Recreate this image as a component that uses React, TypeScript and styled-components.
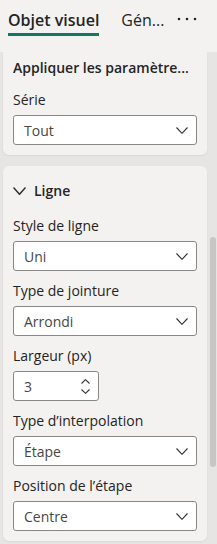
import React from "react"
import styled, { createGlobalStyle } from "styled-components"

const Global = createGlobalStyle`
    html, body { margin: 0; padding: 0; }
    body { font-family: "Segoe UI", "Open Sans", sans-serif; color: #252423; }
`

const Pane = styled.div`
    width: 217px;
    height: 544px;
    overflow: hidden;
    display: flex;
    flex-direction: column;
    background: #e6e5e3;
`

const TabBar = styled.div`
    height: 52px;
    flex: none;
    background: #f3f2f1;
    display: flex;
    align-items: flex-start;
    padding-left: 8px;
    box-sizing: border-box;
`

const Tab = styled.div<{ $active?: boolean }>`
    font-size: 16px;
    line-height: 22px;
    padding-top: 9px;
    padding-bottom: 2px;
    margin-right: ${p => (p.$active ? "22px" : "13px")};
    font-weight: ${p => (p.$active ? 600 : 400)};
    color: #252423;
    border-bottom: 3px solid ${p => (p.$active ? "#117865" : "transparent")};
    white-space: nowrap;
`

const More = styled.div`
    padding-top: 17px;
    display: flex;
`

const Body = styled.div`
    flex: 1;
    display: flex;
    min-height: 0;
`

const Column = styled.div`
    width: 204px;
    margin-left: 3px;
    display: flex;
    flex-direction: column;
    gap: 11px;
`

const Card = styled.div<{ $clipped?: boolean }>`
    background: #f3f2f1;
    border-radius: ${p => (p.$clipped ? "0 0 6px 6px" : "6px")};
    padding: ${p => (p.$clipped ? "6px" : "15px")} 10px 10px 10px;
    display: flex;
    flex-direction: column;
    box-shadow: 0 1px 2px rgba(0, 0, 0, 0.06);
`

const Heading = styled.div`
    font-size: 14px;
    line-height: 20px;
    font-weight: 600;
    white-space: nowrap;
    overflow: hidden;
    text-overflow: ellipsis;
`

const SectionHead = styled.div`
    display: flex;
    align-items: center;
    gap: 8px;
    font-size: 14px;
    line-height: 20px;
    font-weight: 600;
    margin-bottom: 5px;
`

const Label = styled.div<{ $first?: boolean }>`
    font-size: 14px;
    line-height: 20px;
    margin-top: ${p => (p.$first ? "12px" : "10px")};
    margin-bottom: 5px;
`

const Field = styled.div<{ $width?: number }>`
    box-sizing: border-box;
    height: 30px;
    width: ${p => (p.$width ? `${p.$width}px` : "184px")};
    background: #ffffff;
    border: 1px solid #8a8886;
    border-radius: 3px;
    display: flex;
    align-items: center;
    justify-content: space-between;
    padding: 0 8px 0 10px;
    font-size: 14px;
    color: #484644;
`

const Spinner = styled.div`
    display: flex;
    flex-direction: column;
    gap: 5px;
`

const Track = styled.div`
    width: 10px;
    flex: none;
    position: relative;
`

const Thumb = styled.div`
    position: absolute;
    left: 3px;
    width: 6px;
    top: 185px;
    height: 230px;
    border-radius: 3px;
    background: #c8c6c4;
`

const Chevron = ({ w = 12, h = 7, up = false, sw = 1.1 }: { w?: number; h?: number; up?: boolean; sw?: number }) => (
    <svg width={w} height={h} viewBox={`0 0 ${w} ${h}`} fill="none">
        <path
            d={up ? `M0.5 ${h - 0.5} L${w / 2} 0.7 L${w - 0.5} ${h - 0.5}` : `M0.5 0.5 L${w / 2} ${h - 0.7} L${w - 0.5} 0.5`}
            stroke="#323130"
            strokeWidth={sw}
        />
    </svg>
)

const Dots = () => (
    <svg width="20" height="4" viewBox="0 0 20 4" fill="#252423">
        <circle cx="2" cy="2" r="1.3" />
        <circle cx="10" cy="2" r="1.3" />
        <circle cx="18" cy="2" r="1.3" />
    </svg>
)

const Select = ({ value }: { value: string }) => (
    <Field>
        <span>{value}</span>
        <Chevron />
    </Field>
)

const App = () => (
    <Pane>
        <Global />
        <TabBar>
            <Tab $active>Objet visuel</Tab>
            <Tab>Gén...</Tab>
            <More>
                <Dots />
            </More>
        </TabBar>
        <Body>
            <Column>
                <Card $clipped>
                    <Heading>Appliquer les paramètre...</Heading>
                    <Label $first>Série</Label>
                    <Select value="Tout" />
                </Card>
                <Card>
                    <SectionHead>
                        <Chevron w={13} h={8} sw={1.5} />
                        Ligne
                    </SectionHead>
                    <Label>Style de ligne</Label>
                    <Select value="Uni" />
                    <Label>Type de jointure</Label>
                    <Select value="Arrondi" />
                    <Label>Largeur (px)</Label>
                    <Field $width={86}>
                        <span>3</span>
                        <Spinner>
                            <Chevron w={9} h={5} up />
                            <Chevron w={9} h={5} />
                        </Spinner>
                    </Field>
                    <Label>Type d’interpolation</Label>
                    <Select value="Étape" />
                    <Label>Position de l’étape</Label>
                    <Select value="Centre" />
                </Card>
            </Column>
            <Track>
                <Thumb />
            </Track>
        </Body>
    </Pane>
)

export default App
